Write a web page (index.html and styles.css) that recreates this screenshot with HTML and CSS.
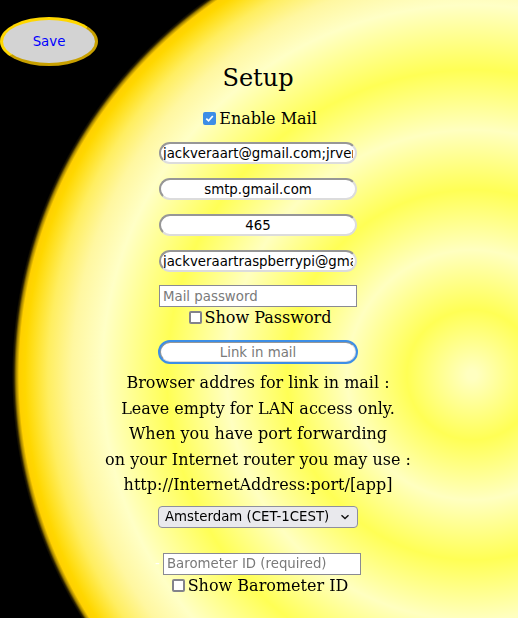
FILE: index.html
```html
<!DOCTYPE html>
<html lang="en">
<head>
<meta charset="utf-8">
<title>Setup</title>
<link rel="stylesheet" href="styles.css">
</head>
<body>
<div class="page">
  <button class="save" type="button">Save</button>
  <h2 class="title">Setup</h2>
  <label class="check-row check-first"><input class="box" type="checkbox" checked>Enable Mail</label>
  <input class="field round" type="text" value="jackveraart@gmail.com;jrveraart@gmail.com">
  <input class="field round" type="text" value="smtp.gmail.com">
  <input class="field round" type="text" value="465">
  <input class="field round" type="text" value="jackveraartraspberrypi@gmail.com">
  <input class="field plain pw" type="password" placeholder="Mail password">
  <label class="check-row check-after"><input class="box" type="checkbox">Show Password</label>
  <input class="field round link" type="text" placeholder="Link in mail" autofocus>
  <p class="info">Browser addres for link in mail :<br>Leave empty for LAN access only.<br>When you have port forwarding<br>on your Internet router you may use :<br>http://InternetAddress:port/[app]</p>
  <select class="zone">
    <option>Amsterdam (CET-1CEST)</option>
  </select>
  <div class="baro-row"><span class="dash">-</span><input class="field plain baro" type="text" placeholder="Barometer ID (required)"></div>
  <label class="check-row check-after"><input class="box" type="checkbox">Show Barometer ID</label>
</div>
</body>
</html>
```
FILE: styles.css
```css
html {
  background: #000;
}
body {
  margin: 0;
  min-height: 618px;
  font-family: "DejaVu Serif", serif;
  color: #000;
  background: radial-gradient(circle 460px at 472px 375px,
    #ffffc0 5px,
    #ffff55 65px,
    #ffffc0 125px,
    #ffff55 185px,
    #ffffc0 245px,
    #ffff55 305px,
    #ffffc6 370px,
    #fff7a0 400px,
    #ffee60 424px,
    #ffe020 439px,
    #ffd700 447px,
    #ffd000 453px,
    #a08000 456px,
    #2a2000 458px,
    #000 460px);
}
.page {
  display: flex;
  flex-direction: column;
  align-items: center;
  padding: 17px 2px 0 0;
}
.save {
  align-self: flex-start;
  width: 98px;
  height: 49px;
  margin: 0;
  padding: 0;
  border-radius: 50%;
  border: 3px solid;
  border-color: #ffd700 #c8a000 #c8a000 #ffd700;
  background: #d3d3d3;
  color: #0000ff;
  font-family: "DejaVu Sans", sans-serif;
  font-size: 13.333px;
}
.title {
  margin: -2px 0 0;
  font-size: 24px;
  line-height: 28px;
  font-weight: normal;
}
.check-row {
  display: flex;
  align-items: center;
  font-size: 16px;
  line-height: 19px;
  height: 19px;
}
.box {
  appearance: none;
  -webkit-appearance: none;
  box-sizing: border-box;
  width: 13px;
  height: 13px;
  margin: 3px 3px 3px 4px;
  border: 2px solid #83838c;
  border-radius: 2px;
  background: #fff;
}
.box:checked {
  border-color: #3d8ee6;
  background: #3d8ee6 url("data:image/svg+xml,%3Csvg xmlns='http://www.w3.org/2000/svg' viewBox='0 0 9 9'%3E%3Cpath d='M1.3 4.6 3.6 6.8 7.8 2' fill='none' stroke='white' stroke-width='1.7'/%3E%3C/svg%3E") center / 9px 9px no-repeat;
}
.check-first {
  margin-top: 17px;
}
.check-after {
  margin-top: 1px;
}
.field {
  box-sizing: border-box;
  width: 198px;
  height: 22px;
  margin: 14px 0 0;
  font-family: "DejaVu Sans", sans-serif;
  font-size: 13.333px;
  color: #000;
}
.field::placeholder {
  color: #7a7a7a;
}
.round {
  border: 2px solid;
  border-color: #979797 #dcdcdc #dcdcdc #979797;
  border-radius: 11px;
  background: #fff;
  text-align: center;
  padding: 1px 2px;
}
.link:focus {
  outline: 2px solid #3d8ee6;
  outline-offset: -1px;
}
.plain {
  border: 1px solid #8a8a93;
  border-radius: 0;
  background: #fff;
  padding: 1px 3px;
}
.plain:focus {
  outline: none;
}
.pw {
  margin-top: 13px;
}
.info {
  margin: 7px 0 0;
  text-align: center;
  font-size: 16px;
  line-height: 25.5px;
}
.zone {
  appearance: none;
  -webkit-appearance: none;
  box-sizing: border-box;
  width: 200px;
  height: 22px;
  margin-top: 8px;
  padding: 0 0 0 6px;
  border: 1px solid #8f8f9d;
  border-radius: 4px;
  background: #e9e9ed url("data:image/svg+xml,%3Csvg xmlns='http://www.w3.org/2000/svg' viewBox='0 0 10 6'%3E%3Cpath d='M1.5 1.2 5 4.6 8.5 1.2' fill='none' stroke='%23111' stroke-width='1.4'/%3E%3C/svg%3E") right 7px center / 10px 6px no-repeat;
  color: #000;
  font-family: "DejaVu Sans", sans-serif;
  font-size: 13.333px;
}
.baro-row {
  display: flex;
  align-items: center;
  margin-top: 25px;
}
.baro-row .field {
  margin: 0;
}
.dash {
  color: #fff;
  font-family: "DejaVu Sans", sans-serif;
  font-size: 13.333px;
  margin-right: 3px;
}
```
